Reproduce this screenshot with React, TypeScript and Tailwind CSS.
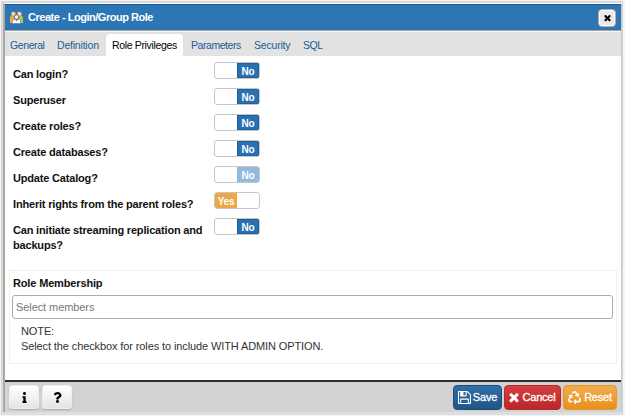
import React from "react";
import { FaInfo, FaQuestion, FaRecycle } from "react-icons/fa";

const TimesIcon = ({ className }: { className: string }) => (
  <svg viewBox="256 256 1280 1350" className={className} fill="currentColor">
    <path d="M1490 1322q0 40-28 68l-136 136q-28 28-68 28t-68-28l-294-294-294 294q-28 28-68 28t-68-28l-136-136q-28-28-28-68t28-68l294-294-294-294q-28-28-28-68t28-68l136-136q28-28 68-28t68 28l294 294 294-294q28-28 68-28t68 28l136 136q28 28 28 68t-28 68l-294 294 294 294q28 28 28 68z" />
  </svg>
);

const SaveIcon = () => (
  <svg viewBox="128 128 1536 1536" className="size-[13px] shrink-0" fill="currentColor">
    <path d="M512 1536h768v-384h-768v384zm896 0h128v-896q0-14-10-38.500t-20-34.500l-281-281q-10-10-34-20t-39-10v416q0 40-28 68t-68 28h-576q-40 0-68-28t-28-68v-416h-128v1280h128v-416q0-40 28-68t68-28h832q40 0 68 28t28 68v416zm-384-928v-320q0-13-9.500-22.500t-22.500-9.500h-192q-13 0-22.500 9.500t-9.500 22.500v320q0 13 9.500 22.500t22.500 9.500h192q13 0 22.500-9.500t9.500-22.500zm640 32v928q0 40-28 68t-68 28h-1344q-40 0-68-28t-28-68v-1344q0-40 28-68t68-28h928q40 0 88 20t76 48l280 280q28 28 48 76t20 88z" />
  </svg>
);

const GroupIcon = () => (
  <svg viewBox="0 0 13 13" className="h-[13px] w-[13px]">
    <path d="M0 12V6Q.5 4.500 3 4.500h2V12z" fill="#f0a55c" />
    <path d="M8 4.500h2q2.500 0 3 2V12H8z" fill="#a5cf4e" />
    <circle cx="3.400" cy="3" r="2.300" fill="#f6dab4" stroke="#a98662" strokeWidth=".6" />
    <circle cx="9.400" cy="3" r="2.300" fill="#f6dab4" stroke="#a98662" strokeWidth=".6" />
    <path d="M2.300 12.500v-2.700Q3 8 6.500 8t4.200 1.800v2.700z" fill="#fbfcfd" stroke="#68727c" strokeWidth=".6" />
    <circle cx="6.500" cy="6" r="2.300" fill="#fff6e8" stroke="#58504c" strokeWidth=".8" />
    <path d="M5.700 8.500l.8 2 .8-2" fill="#454c55" />
  </svg>
);

const tabs = [
  { label: "General", box: "w-[47px] pl-[5px] tracking-[-0.4px]" },
  { label: "Definition", box: "w-[54px] pl-[5px] tracking-[-0.2px]" },
  { label: "Role Privileges", box: "w-[77px] pl-[6px] tracking-[-0.35px]" },
  { label: "Parameters", box: "w-[66px] pl-[8px] tracking-[-0.45px]" },
  { label: "Security", box: "w-[49px] pl-[5px] tracking-[-0.2px]" },
  { label: "SQL", box: "w-[32px] pl-[5px] tracking-[-0.4px]" },
];

const privileges = [
  { label: "Can login?", on: false, disabled: false },
  { label: "Superuser", on: false, disabled: false },
  { label: "Create roles?", on: false, disabled: false },
  { label: "Create databases?", on: false, disabled: false },
  { label: "Update Catalog?", on: false, disabled: true },
  { label: "Inherit rights from the parent roles?", on: true, disabled: false },
  { label: "Can initiate streaming replication and backups?", on: false, disabled: false },
];

function Toggle({ on, disabled }: { on: boolean; disabled: boolean }) {
  return (
    <div className="flex h-[17px] w-[46px] overflow-hidden rounded-[3px] border border-[#c6c6c6] bg-white text-[10px] leading-[17px] font-bold tracking-[-0.2px] text-white">
      {on ? (
        <span className="w-[22px] bg-[#eca747] text-center">Yes</span>
      ) : (
        <span className={`ml-auto h-[15px] w-[22px] text-center ${disabled ? "bg-[#94b9db]" : "bg-[#2a71b2] shadow-[inset_0_0_0_1px_#1d5f9f]"}`}>No</span>
      )}
    </div>
  );
}

export default function App() {
  return (
    <div className="h-[416px] w-[625px] overflow-hidden bg-[#f4f4f4] pt-px pr-[2px] pl-px font-['Liberation_Sans',Arial,sans-serif] text-[11px] text-[#111]">
      <div className="flex h-[414px] flex-col border border-b-0 border-[#d5d5d5] bg-[#dedede] pt-px pl-px">
        <div className="flex h-[409px] flex-col border-t border-r border-l-2 border-[#a8a8a8] border-t-[#fff] border-r-[#c8c8c8]">
          <header className="flex h-[26px] shrink-0 items-center border-t border-[#145b98] bg-[#2d76b4] pr-[5px] pl-[5px]">
            <GroupIcon />
            <h1 className="ml-[5px] flex-1 text-[11px] font-bold tracking-[-0.48px] text-white">Create - Login/Group Role</h1>
            <button className="flex h-[18px] w-[18px] items-center justify-center rounded-[4px] border border-[#b4aba7] bg-[#e9e9e9] text-black shadow-[inset_0_0_0_1px_#fff]">
              <TimesIcon className="h-[8px] w-[7px]" />
            </button>
          </header>
          <nav className="flex h-[26px] shrink-0 items-stretch border-t border-[#aaa4a0] bg-[#e2e2e2] pt-[3px] text-[10.5px] shadow-[inset_0_1px_0_#f6f6f6]">
            {tabs.map((tab) => (
              <button key={tab.label} className={`flex items-center pt-[2px] whitespace-nowrap ${tab.box} ${tab.label === "Role Privileges" ? "rounded-t-[4px] bg-white text-black" : "text-[#175d96]"}`}>
                {tab.label}
              </button>
            ))}
          </nav>
          <main className="flex min-h-0 flex-1 flex-col bg-white px-[4px]">
            <div className="h-[214px] pt-[6px] pl-[4px]">
              {privileges.map((item) => (
                <div key={item.label} className="flex min-h-[26px] items-start">
                  <span className="w-[201px] pt-[5px] pr-px text-[11px] leading-[15px] font-bold tracking-[-0.18px]">{item.label}</span>
                  <Toggle on={item.on} disabled={item.disabled} />
                </div>
              ))}
            </div>
            <section className="h-[94px] w-[608px] border border-[#fbeedd] px-[2px]">
              <h2 className="flex h-[24px] items-center pt-px pl-px text-[11px] font-bold tracking-[-0.15px]">Role Membership</h2>
              <input className="block h-[24px] w-[601px] rounded-[3px] border border-[#aaa] bg-white px-[3px] text-[11px] tracking-[-0.08px] placeholder:text-[#777] placeholder:opacity-100" placeholder="Select members" />
              <p className="pt-[5px] pl-[9px] text-[11px] leading-[15px] tracking-[-0.11px] text-[#333]">NOTE:<br />Select the checkbox for roles to include WITH ADMIN OPTION.</p>
            </section>
          </main>
          <footer className="flex h-[32px] shrink-0 items-center border-t-2 border-[#302b2d] bg-[#d2d2d2] pr-[4px] pl-[4px] text-[11px] font-bold">
            <button className="flex h-[24px] w-[30px] items-center justify-center rounded-[3px] border border-[#eee] bg-linear-to-b from-white to-[#e4e4e4] text-black shadow-[0_1px_1px_#aaa]"><FaInfo className="size-[11px]" /></button>
            <button className="ml-[3px] flex h-[24px] w-[30px] items-center justify-center rounded-[3px] border border-[#eee] bg-linear-to-b from-white to-[#e4e4e4] text-black shadow-[0_1px_1px_#aaa]"><FaQuestion className="size-[11px]" /></button>
            <div className="ml-auto flex gap-[2px] text-white">
              <button className="flex h-[25px] w-[49px] items-center justify-center gap-[2px] rounded-[4px] border border-[#174e80] bg-linear-to-b from-[#306fa7] to-[#205687]"><SaveIcon /><span className="text-[11px] font-normal tracking-[-0.1px] [-webkit-text-stroke:0.3px_white]">Save</span></button>
              <button className="flex h-[25px] w-[57px] items-center justify-center gap-[3px] rounded-[4px] border border-[#b5292d] bg-linear-to-b from-[#d63f41] to-[#bb262a]"><TimesIcon className="h-[11px] w-[10px] shrink-0" /><span className="text-[11px] font-normal tracking-[-0.2px] [-webkit-text-stroke:0.3px_white]">Cancel</span></button>
              <button className="flex h-[25px] w-[54px] items-center justify-center gap-[3px] rounded-[4px] border border-[#e59729] bg-linear-to-b from-[#f2ad4b] to-[#e99114]"><FaRecycle className="size-[13px] shrink-0" /><span className="text-[11px] font-normal tracking-[-0.2px] [-webkit-text-stroke:0.3px_white]">Reset</span></button>
            </div>
          </footer>
        </div>
      </div>
    </div>
  );
}
